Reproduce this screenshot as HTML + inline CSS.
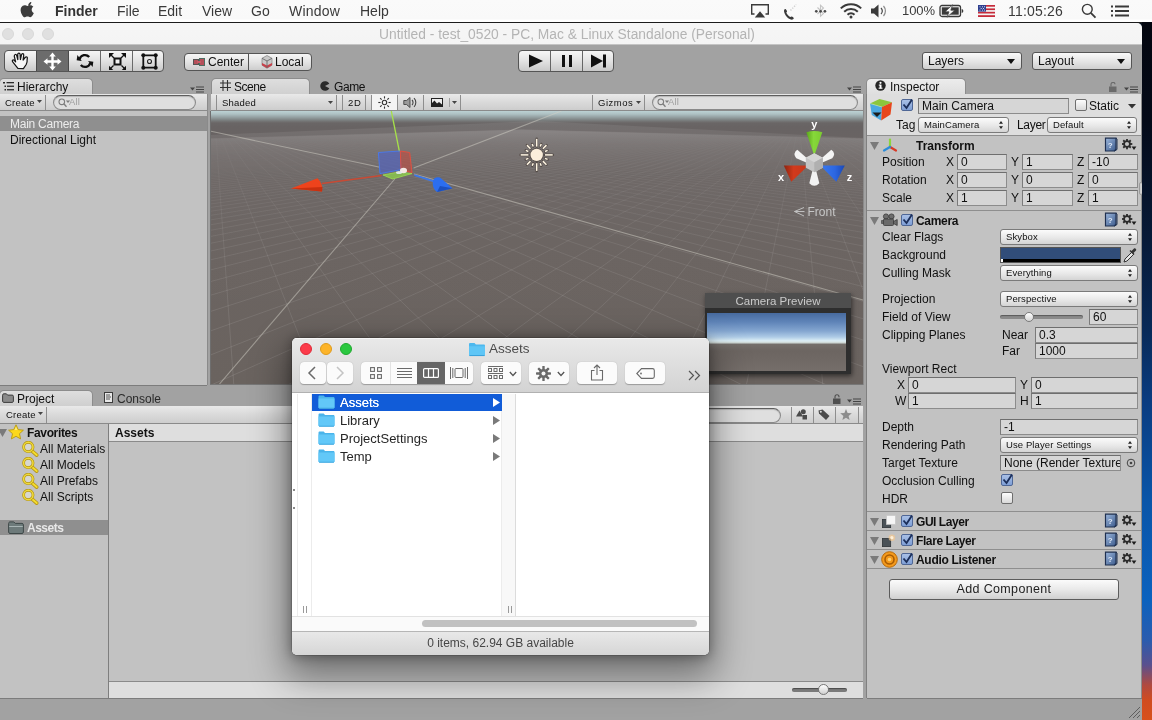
<!DOCTYPE html>
<html>
<head>
<meta charset="utf-8">
<title>Unity</title>
<style>
*{box-sizing:border-box;margin:0;padding:0}
html{background:#0a1422}
#win,#menubar,#finder{will-change:transform}
html,body{width:1152px;height:720px;overflow:hidden;font-family:"Liberation Sans",sans-serif;font-size:12px;color:#111}
.a{position:absolute}
#desk{left:1142px;top:22px;width:10px;height:698px;background:linear-gradient(#03060f 0px,#040a18 98px,#071a38 218px,#082a58 308px,#0a3c80 378px,#0a55a8 478px,#0b62be 578px,#2a5cae 618px,#5a508e 643px,#b04a40 663px,#d04c20 678px,#d8501c 698px)}
#menubar{left:0;top:0;width:1152px;height:22px;background:linear-gradient(#fafafa,#f9f9f9 19px,#fff 20px)}
#menuline{left:0;top:22px;width:1152px;height:1px;background:#1c1c1c}
.mi{position:absolute;top:2px;font-size:14px;line-height:18px;color:#3a3a3a;white-space:nowrap}
#win{left:0;top:23px;width:1142px;height:697px;background:#a2a2a2;border-top-right-radius:5px;overflow:hidden}
#titlebar{left:0;top:0;width:1142px;height:22px;background:linear-gradient(#f6f6f6,#f4f4f4);border-bottom:1px solid #c4c4c4}
#title{left:0;top:4px;width:1134px;text-align:center;font-size:13.8px;line-height:16px;color:#b4b4b4;white-space:nowrap}
.tl{position:absolute;width:12px;height:12px;border-radius:6px;background:#e0e0e0;border:1px solid #d9d9d9;top:5px}
/* unity generic */
.ubtn{position:absolute;background:linear-gradient(#f4f4f4,#dadada 60%,#c4c4c4);border:1px solid #5f5f5f;}
.panelbg{position:absolute;background:#c2c2c2}
.tab{position:absolute;height:17px;background:linear-gradient(#e2e2e2,#cdcdcd);border:1px solid #8a8a8a;border-bottom:none;border-radius:4px 4px 0 0;font-size:12px;line-height:15px;white-space:nowrap}
.tbar{position:absolute;height:17px;background:linear-gradient(#e8e8e8,#d2d2d2);border-bottom:1px solid #8e8e8e;border-top:1px solid #f0f0f0}
.t{position:absolute;white-space:nowrap;font-size:12px;line-height:14px;color:#111}
.b{font-weight:bold}
/* panels */
.pbg{position:absolute;background:#c2c2c2}
.tabrow-menu{position:absolute}
.utab{position:absolute;height:17px;background:linear-gradient(#dedede,#cfcfcf);border:1px solid #8c8c8c;border-bottom:none;border-radius:5px 5px 0 0}
.utb{position:absolute;height:17px;background:linear-gradient(#e9e9e9,#dadada 50%,#cdcdcd);border-bottom:1px solid #8a8a8a}
.sep{position:absolute;width:1px;background:#8e8e8e}
.w{color:#fff}
.fld{position:absolute;height:16px;background:#d6d6d6;border:1px solid #8c8c8c;border-top-color:#6e6e6e;border-left-color:#7a7a7a;font-size:12px;line-height:14px;padding-left:3px;white-space:nowrap;overflow:hidden;color:#111}
.dd{position:absolute;height:16px;background:linear-gradient(#fbfbfb,#e8e8e8 55%,#d4d4d4);border:1px solid #7a7a7a;border-radius:3px;font-size:9.500px;letter-spacing:.1px;line-height:14px;padding-left:5px;white-space:nowrap;overflow:hidden;color:#111}
.cb{position:absolute;width:12px;height:12px;border:1px solid #6e6e6e;border-radius:2px;background:linear-gradient(#fdfdfd,#d9d9d9)}
.cb.on{background:linear-gradient(#a9c0e6,#7f9fd6);border-color:#4f6796}
.hline{position:absolute;height:1px;background:#8e8e8e}
.search{position:absolute;height:15px;border-radius:8px;background:#dfdfdf;border:1px solid #8a8a8a;border-top-color:#5e5e5e;box-shadow:inset 0 1px 1px rgba(0,0,0,.18)}

.fbtn{position:absolute;top:24px;height:22px;border-radius:4px;background:#fbfbfb;box-shadow:0 .5px 1px rgba(0,0,0,.28)}
.tb{font-size:9.500px;letter-spacing:.2px;line-height:13px;margin-top:-1px}

</style>
</head>
<body>
<div class="a" id="menubar">
  <svg class="a" style="left:20px;top:1px" width="16" height="19" viewBox="0 0 16 19"><path fill="#3c3c3c" d="M11.2 1.2c.1 1-.3 1.9-.9 2.6-.6.7-1.5 1.2-2.4 1.100-.1-.9.3-1.900.9-2.500.6-.7 1.600-1.200 2.400-1.200zM13.900 13c-.4.900-.6 1.300-1.100 2.100-.7 1.100-1.700 2.400-2.900 2.400-1.100 0-1.400-.7-2.800-.7-1.500 0-1.800.7-2.900.7-1.200 0-2.100-1.200-2.800-2.300-2-3-2.200-6.600-1-8.500.900-1.300 2.200-2.100 3.500-2.100 1.300 0 2.100.7 3.200.7 1 0 1.700-.7 3.200-.7 1.100 0 2.300.6 3.100 1.700-2.700 1.500-2.300 5.400.5 6.700z" transform="scale(.93) translate(1,0)"/></svg>
  <div class="mi b" style="left:55px;color:#333">Finder</div>
  <div class="mi" style="left:117px">File</div>
  <div class="mi" style="left:158px">Edit</div>
  <div class="mi" style="left:202px">View</div>
  <div class="mi" style="left:251px">Go</div>
  <div class="mi" style="left:289px;letter-spacing:.2px">Window</div>
  <div class="mi" style="left:360px">Help</div>
  <!-- airplay -->
  <svg class="a" style="left:750px;top:3px" width="20" height="16" viewBox="0 0 20 16"><path d="M4.500 11H1.700V1.700h16.600V11h-2.800" fill="none" stroke="#3a3a3a" stroke-width="1.400"/><path d="M10 8.200l5.200 6.300H4.800z" fill="#3a3a3a"/></svg>
  <!-- phone -->
  <svg class="a" style="left:782px;top:3px" width="17" height="17" viewBox="0 0 18 18"><path d="M2.200 7.500c.5-1 1.300-1.400 1.800-1 .6.500 1.200 1.600 1.300 2.200.1.600-.6.900-.7 1.400.4 1.700 2.400 3.900 4.300 4.700.5 0 .9-.7 1.500-.5.600.2 1.600 1 2 1.600.3.600-.3 1.300-1.300 1.700-1.100.4-3.800-.6-5.900-2.800-2.100-2.200-3.500-5.600-3-7.300z" fill="#3a3a3a"/><path d="M9 8l6-6.500" stroke="#d0d0d0" stroke-width="1.600" stroke-dasharray="1.400 1.400"/></svg>
  <!-- bluetooth -->
  <svg class="a" style="left:813px;top:2px" width="16" height="18" viewBox="0 0 16 18"><path d="M4.500 5.500l6 6-3 2.800V3.200l3 2.800-6 6" fill="none" stroke="#c4c4c4" stroke-width="1.100"/><circle cx="3.300" cy="9.300" r="1.350" fill="#4a4a4a"/><circle cx="7.600" cy="9.300" r="1.350" fill="#4a4a4a"/><circle cx="11.900" cy="9.300" r="1.350" fill="#4a4a4a"/></svg>
  <!-- wifi -->
  <svg class="a" style="left:839px;top:2px" width="24" height="17" viewBox="0 0 24 17"><g fill="none" stroke="#3a3a3a" stroke-width="2" stroke-linecap="butt"><path d="M1.800 6.400a14.500 14.500 0 0 1 20.400 0"/><path d="M5.200 9.700a9.700 9.700 0 0 1 13.600 0"/><path d="M8.500 12.800a5 5 0 0 1 7 0"/></g><circle cx="12" cy="15" r="1.500" fill="#3a3a3a"/></svg>
  <!-- speaker -->
  <svg class="a" style="left:870px;top:3px" width="20" height="16" viewBox="0 0 20 16"><path d="M1 5.500h3l4.500-4v13l-4.500-4H1z" fill="#3a3a3a"/><path d="M11 5a4.500 4.500 0 0 1 0 6" fill="none" stroke="#4a4a4a" stroke-width="1.200"/><path d="M13.500 3a7.500 7.500 0 0 1 0 10" fill="none" stroke="#8a8a8a" stroke-width="1.200"/></svg>
  <div class="mi" style="left:902px;font-size:13px;letter-spacing:-.1px">100%</div>
  <!-- battery -->
  <svg class="a" style="left:939px;top:4px" width="26" height="14" viewBox="0 0 26 14"><rect x="1" y="1.500" width="20.500" height="11" rx="2" fill="none" stroke="#3a3a3a" stroke-width="1.300"/><rect x="2.800" y="3.300" width="16.900" height="7.400" fill="#3a3a3a"/><path d="M22.700 5v4c1-.2 1.600-1 1.600-2s-.6-1.800-1.600-2z" fill="#3a3a3a"/><path d="M13.500 .8L6 7.800h4l-2 5.400 7.800-7h-4z" fill="#fafafa" stroke="#3a3a3a" stroke-width=".7"/></svg>
  <!-- flag -->
  <svg class="a" style="left:978px;top:5px" width="17" height="12" viewBox="0 0 17 12"><rect width="17" height="12" fill="#f4f4f4"/><g fill="#c62b3a"><rect y="0" width="17" height="1.700"/><rect y="3.400" width="17" height="1.700"/><rect y="6.800" width="17" height="1.700"/><rect y="10.200" width="17" height="1.800"/></g><rect width="8" height="6.600" fill="#2e3f8f"/><g fill="#cfd4ee"><rect x="1.500" y="1.300" width="1" height="1"/><rect x="4" y="1.300" width="1" height="1"/><rect x="6" y="1.300" width="1" height="1"/><rect x="2.700" y="3" width="1" height="1"/><rect x="5" y="3" width="1" height="1"/><rect x="1.500" y="4.600" width="1" height="1"/><rect x="4" y="4.600" width="1" height="1"/><rect x="6" y="4.600" width="1" height="1"/></g></svg>
  <div class="mi" style="left:1008px;letter-spacing:.2px">11:05:26</div>
  <!-- search -->
  <svg class="a" style="left:1081px;top:3px" width="16" height="16" viewBox="0 0 16 16"><circle cx="6.300" cy="6.300" r="4.900" fill="none" stroke="#3a3a3a" stroke-width="1.400"/><path d="M9.800 9.800l4.700 4.900" stroke="#3a3a3a" stroke-width="1.800"/></svg>
  <!-- list -->
  <svg class="a" style="left:1110px;top:5px" width="20" height="12" viewBox="0 0 20 12"><g fill="#3a3a3a"><rect x="1" y="0.500" width="2" height="2"/><rect x="1" y="5" width="2" height="2"/><rect x="1" y="9.500" width="2" height="2"/><rect x="5" y="0.500" width="14" height="2"/><rect x="5" y="5" width="14" height="2"/><rect x="5" y="9.500" width="14" height="2"/></g></svg>
</div>
<div class="a" id="menuline"></div>
<div class="a" id="desk"></div>
<div class="a" id="win">
  <div class="a" id="titlebar">
    <div class="tl" style="left:2px"></div><div class="tl" style="left:22px"></div><div class="tl" style="left:42px"></div>
    <div class="a" id="title">Untitled - test_0520 - PC, Mac &amp; Linux Standalone (Personal)</div>
  </div>
  <!-- ===== main toolbar ===== -->
  <div class="a" id="tools" style="left:4px;top:27px;width:160px;height:22px;border:1px solid #555;border-radius:4px;background:linear-gradient(#f6f6f6,#e2e2e2 50%,#c9c9c9);overflow:hidden">
    <div class="a" style="left:31px;top:0;width:33px;height:20px;background:#6c6c6c;border-left:1px solid #4a4a4a;border-right:1px solid #4a4a4a"></div>
    <div class="a" style="left:95px;top:0;width:1px;height:20px;background:#6a6a6a"></div>
    <div class="a" style="left:127px;top:0;width:1px;height:20px;background:#6a6a6a"></div>
    <!-- hand -->
    <svg class="a" style="left:5px;top:0px" width="20" height="20" viewBox="0 0 20 20"><path d="M7.900 17.300L3.300 11.600Q1.600 9.700 2.800 9Q4 8.400 5.600 10.800L4.300 5.300Q4.200 3.600 5.300 3.500Q6.400 3.400 6.900 5L7.800 8.600L7.700 3.300Q7.800 2 8.900 2Q10 2 10.100 3.300L10.400 8.500L11.500 3.800Q11.900 2.500 12.900 2.700Q13.900 2.900 13.700 4.300L13.100 9L15.100 6.500Q16 5.400 16.900 6Q17.700 6.600 17.200 7.900Q17.400 11 16.200 13.500L13.400 17.700z" fill="#f6f6f6" stroke="#161616" stroke-width="1.250" stroke-linejoin="round"/></svg>
    <!-- move -->
    <svg class="a" style="left:38px;top:1px" width="19" height="19" viewBox="0 0 19 19"><path d="M9.500 0.500l3.300 4h-2.100v3.800h3.800V6.200l4 3.300-4 3.300v-2.100h-3.800v3.800h2.100l-3.300 4-3.300-4h2.100v-3.800H4.500v2.100l-4-3.300 4-3.300v2.100h3.800V4.500H6.200z" fill="#fff"/></svg>
    <!-- rotate -->
    <svg class="a" style="left:71px;top:1px" width="18" height="18" viewBox="0 0 18 18"><g fill="none" stroke="#111" stroke-width="2.300"><path d="M3.600 7.200A5.600 5.600 0 0 1 13.200 5"/><path d="M14.400 10.800A5.600 5.600 0 0 1 4.800 13"/></g><path d="M1 3.200v5.300h5.300z" fill="#111" transform="rotate(8 3 6)"/><path d="M17 14.800V9.500h-5.300z" fill="#111" transform="rotate(8 15 12)"/></svg>
    <!-- scale -->
    <svg class="a" style="left:103px;top:1px" width="19" height="19" viewBox="0 0 19 19"><rect x="6.500" y="6.500" width="6" height="6" fill="#f0f0f0" stroke="#111" stroke-width="2"/><g fill="#111"><path d="M1 1h5L1 6z"/><path d="M18 1h-5l5 5z"/><path d="M1 18h4.200L1 13.800z"/><path d="M18 18h-4.200l4.200-4.200z"/></g><g stroke="#111" stroke-width="1.300"><path d="M2 2l4 4M17 2l-4 4M2 17l3.500-3.500M17 17l-3.500-3.500"/></g></svg>
    <!-- rect -->
    <svg class="a" style="left:135px;top:1px" width="19" height="19" viewBox="0 0 19 19"><g stroke="#111" stroke-width="1.800"><path d="M5 3.300h9M5 15.700h9M3.300 5v9M15.700 5v9"/></g><g fill="#111"><circle cx="3.300" cy="3.300" r="2"/><circle cx="15.700" cy="3.300" r="2"/><circle cx="3.300" cy="15.700" r="2"/><circle cx="15.700" cy="15.700" r="2"/></g><circle cx="9.500" cy="9.500" r="2" fill="none" stroke="#222" stroke-width="1.100"/></svg>
  </div>
  <!-- center/local -->
  <div class="a" style="left:184px;top:30px;width:128px;height:18px;border:1px solid #555;border-radius:4px;background:linear-gradient(#f6f6f6,#e4e4e4 50%,#cdcdcd)">
    <div class="a" style="left:63px;top:0;width:1px;height:16px;background:#555"></div>
    <svg class="a" style="left:8px;top:4px" width="12" height="8" viewBox="0 0 12 8"><rect x=".5" y="1.500" width="5" height="5" fill="#b4505a" stroke="#555" stroke-width="1"/><rect x="6.500" y=".5" width="5" height="7" fill="#b4505a" stroke="#4e6e62" stroke-width="1"/><rect x="4" y="3" width="4" height="2" fill="#c85a64"/></svg>
    <div class="t" style="left:23px;top:1px">Center</div>
    <svg class="a" style="left:76px;top:1px" width="12" height="14" viewBox="0 0 12 14"><path d="M6 .5l5 2.800v6.900L6 13.200 1 10.200V3.300z" fill="#c9c9c9" stroke="#8a8a8a" stroke-width=".8"/><path d="M1 8l5 2.500L11 8v2.200L6 13.200 1 10.200z" fill="#c8404a"/><path d="M6 6v7M1 3.300L6 6l5-2.700" fill="none" stroke="#6a6a6a" stroke-width=".9"/></svg>
    <div class="t" style="left:90px;top:1px">Local</div>
  </div>
  <!-- play -->
  <div class="a" style="left:518px;top:27px;width:96px;height:22px;border:1px solid #555;border-radius:4px;background:linear-gradient(#f6f6f6,#e2e2e2 50%,#c9c9c9)">
    <div class="a" style="left:31px;top:0;width:1px;height:20px;background:#666"></div>
    <div class="a" style="left:63px;top:0;width:1px;height:20px;background:#666"></div>
    <svg class="a" style="left:9px;top:3px" width="16" height="14" viewBox="0 0 16 14"><path d="M1 .5l14 6.500L1 13.500z" fill="#111"/></svg>
    <svg class="a" style="left:42px;top:4px" width="12" height="12" viewBox="0 0 12 12"><rect x="1" y="0" width="3" height="12" fill="#111"/><rect x="8" y="0" width="3" height="12" fill="#111"/></svg>
    <svg class="a" style="left:71px;top:3px" width="18" height="14" viewBox="0 0 18 14"><path d="M1 .5l12 6.500L1 13.500z" fill="#111"/><rect x="13" y=".5" width="3" height="13" fill="#111"/></svg>
  </div>
  <!-- layers / layout -->
  <div class="a" style="left:922px;top:29px;width:100px;height:18px;border:1px solid #555;border-radius:3px;background:linear-gradient(#fafafa,#e6e6e6 50%,#cfcfcf)">
    <div class="t" style="left:5px;top:1px">Layers</div>
    <svg class="a" style="left:84px;top:6px" width="8" height="5" viewBox="0 0 8 5"><path d="M0 0h8L4 5z" fill="#111"/></svg>
  </div>
  <div class="a" style="left:1032px;top:29px;width:100px;height:18px;border:1px solid #555;border-radius:3px;background:linear-gradient(#fafafa,#e6e6e6 50%,#cfcfcf)">
    <div class="t" style="left:5px;top:1px">Layout</div>
    <svg class="a" style="left:84px;top:6px" width="8" height="5" viewBox="0 0 8 5"><path d="M0 0h8L4 5z" fill="#111"/></svg>
  </div>

<div class="a" style="left:0;top:-23px;width:1142px;height:720px">
<div class="utab" style="left:-1px;top:78px;width:94px"></div>
<svg class="a" style="left:3px;top:82px" width="11" height="9" viewBox="0 0 11 9"><g fill="#2b2b2b"><rect x="0" y="0" width="2" height="1.500"/><rect x="1.500" y="3.500" width="1.500" height="1.500"/><rect x="1.500" y="7" width="1.500" height="1.500"/><rect x="3.500" y="0" width="7.500" height="1.300"/><rect x="4" y="3.600" width="7" height="1.300"/><rect x="4" y="7.100" width="7" height="1.300"/></g></svg>
<div class="t " style="left:17px;top:80px;">Hierarchy</div>
<svg class="a" style="left:190px;top:86px" width="14" height="7" viewBox="0 0 14 7"><path d="M0 1.500h5L2.500 4.500z" fill="#444"/><path d="M6 1h8M6 3.500h8M6 6h8" stroke="#444" stroke-width="1"/></svg>
<div class="utb" style="left:0;top:94px;width:207px"></div>
<div class="t tb" style="left:5px;top:97px;">Create</div>
<svg class="a" style="left:37px;top:100px" width="5" height="3" viewBox="0 0 5 3"><path d="M0 0h5L2.500 3z" fill="#444"/></svg>
<div class="sep" style="left:45px;top:95px;height:15px"></div>
<div class="search" style="left:53px;top:95px;width:143px"></div><svg class="a" style="left:58px;top:98px" width="14" height="10" viewBox="0 0 14 10"><circle cx="3.800" cy="3.800" r="2.800" fill="none" stroke="#7d7d7d" stroke-width="1.100"/><path d="M5.800 5.800l2.700 3" stroke="#7d7d7d" stroke-width="1.300"/><path d="M7.800 2.500h4.400L10 5z" fill="#7d7d7d"/></svg><div class="t tb" style="left:69px;top:96px;color:#a0a0a0">All</div>
<div class="pbg" style="left:0;top:111px;width:207px;height:274px"></div>
<div class="a" style="left:0;top:116px;width:207px;height:15px;background:#8f8f8f"></div>
<div class="t " style="left:10px;top:117px;color:#ececec;letter-spacing:-.25px">Main Camera</div>
<div class="t " style="left:10px;top:133px;">Directional Light</div>
<div class="hline" style="left:0;top:385px;width:207px;background:#7c7c7c"></div>
<div class="utab" style="left:211px;top:78px;width:99px"></div>
<svg class="a" style="left:220px;top:80px" width="11" height="11" viewBox="0 0 11 11"><path d="M3 0v11M7.500 0v11M0 3h11M0 7.500h11" stroke="#333" stroke-width="1.100"/></svg>
<div class="t " style="left:234px;top:80px;letter-spacing:-.45px">Scene</div>
<svg class="a" style="left:320px;top:81px" width="10" height="10" viewBox="0 0 10 10"><path d="M5 5L9.300 2.800A4.800 4.800 0 1 0 9.300 7.200z" fill="#2a2a2a"/></svg>
<div class="t " style="left:334px;top:80px;letter-spacing:-.4px">Game</div>
<svg class="a" style="left:847px;top:86px" width="14" height="7" viewBox="0 0 14 7"><path d="M0 1.500h5L2.500 4.500z" fill="#444"/><path d="M6 1h8M6 3.500h8M6 6h8" stroke="#444" stroke-width="1"/></svg>
<div class="utb" style="left:211px;top:94px;width:652px"></div>
<div class="sep" style="left:216px;top:95px;height:15px"></div>
<div class="sep" style="left:336px;top:95px;height:15px"></div>
<div class="sep" style="left:342px;top:95px;height:15px"></div>
<div class="sep" style="left:365px;top:95px;height:15px"></div>
<div class="sep" style="left:371px;top:95px;height:15px"></div>
<div class="sep" style="left:397px;top:95px;height:15px"></div>
<div class="sep" style="left:423px;top:95px;height:15px"></div>
<div class="sep" style="left:460px;top:95px;height:15px"></div>
<div class="sep" style="left:592px;top:95px;height:15px"></div>
<div class="sep" style="left:644px;top:95px;height:15px"></div>
<div class="sep" style="left:449px;top:98px;height:9px;background:#a0a0a0"></div>
<div class="t tb" style="left:222px;top:97px;">Shaded</div>
<svg class="a" style="left:328px;top:101px" width="5" height="3" viewBox="0 0 5 3"><path d="M0 0h5L2.500 3z" fill="#444"/></svg>
<div class="t tb" style="left:348px;top:97px;letter-spacing:.6px">2D</div>
<div class="a" style="left:372px;top:94px;width:25px;height:16px;background:#f4f4f4"></div>
<svg class="a" style="left:378px;top:96px" width="13" height="13" viewBox="0 0 13 13"><g stroke="#333" stroke-width="1.100"><path d="M6.500 0.300v2.200" transform="rotate(0 6.500 6.500)"/><path d="M6.500 0.300v2.200" transform="rotate(45 6.500 6.500)"/><path d="M6.500 0.300v2.200" transform="rotate(90 6.500 6.500)"/><path d="M6.500 0.300v2.200" transform="rotate(135 6.500 6.500)"/><path d="M6.500 0.300v2.200" transform="rotate(180 6.500 6.500)"/><path d="M6.500 0.300v2.200" transform="rotate(225 6.500 6.500)"/><path d="M6.500 0.300v2.200" transform="rotate(270 6.500 6.500)"/><path d="M6.500 0.300v2.200" transform="rotate(315 6.500 6.500)"/></g><circle cx="6.500" cy="6.500" r="2.200" fill="none" stroke="#333" stroke-width="1.100"/></svg>
<svg class="a" style="left:403px;top:96px" width="15" height="13" viewBox="0 0 15 13"><path d="M.8 4.500h2.700l3.500-3v10l-3.500-3H.8z" fill="#9a9a9a" stroke="#444" stroke-width=".9"/><path d="M9 4a3.500 3.500 0 0 1 0 5M11 2.200a6 6 0 0 1 0 8.600" fill="none" stroke="#444" stroke-width="1.100"/></svg>
<svg class="a" style="left:431px;top:98px" width="12" height="9" viewBox="0 0 12 9"><rect x=".5" y=".5" width="11" height="8" fill="#eee" stroke="#222" stroke-width="1"/><path d="M1 8V5l2.500-2.500L6 5.500l2-1.500 3 2.500V8z" fill="#222"/></svg>
<svg class="a" style="left:452px;top:101px" width="5" height="3" viewBox="0 0 5 3"><path d="M0 0h5L2.500 3z" fill="#444"/></svg>
<div class="t tb" style="left:598px;top:97px;letter-spacing:.5px">Gizmos</div>
<svg class="a" style="left:636px;top:101px" width="5" height="3" viewBox="0 0 5 3"><path d="M0 0h5L2.500 3z" fill="#444"/></svg>
<div class="search" style="left:652px;top:95px;width:206px"></div><svg class="a" style="left:657px;top:98px" width="14" height="10" viewBox="0 0 14 10"><circle cx="3.800" cy="3.800" r="2.800" fill="none" stroke="#7d7d7d" stroke-width="1.100"/><path d="M5.800 5.800l2.700 3" stroke="#7d7d7d" stroke-width="1.300"/><path d="M7.800 2.500h4.400L10 5z" fill="#7d7d7d"/></svg><div class="t tb" style="left:668px;top:96px;color:#a0a0a0">All</div>
<div class="a" id="scene" style="left:211px;top:111px;width:652px;height:273px;overflow:hidden;background:linear-gradient(#bcd1d3 0px,#aec1c3 3px,#8e9899 7px,#757777 10px,#6a6666 12px,#686363 16px,#6a6463 40px,#6b6461 150px,#6a635f 273px)">
<svg class="a" style="left:0;top:0" width="652" height="273" viewBox="0 0 652 273"><defs><linearGradient id="hz" x1="0" y1="0" x2="0" y2="1"><stop offset="0.03" stop-color="#fff" stop-opacity=".075"/><stop offset="0.2" stop-color="#fff" stop-opacity=".03"/><stop offset="0.5" stop-color="#fff" stop-opacity=".005"/><stop offset="1" stop-color="#fff" stop-opacity="0"/></linearGradient><linearGradient id="gm" x1="0" y1="0" x2="0" y2="1"><stop offset="0.04" stop-color="#fff" stop-opacity=".12"/><stop offset="0.2" stop-color="#fff" stop-opacity=".35"/><stop offset="0.5" stop-color="#fff" stop-opacity=".75"/><stop offset="1" stop-color="#fff" stop-opacity="1"/></linearGradient><mask id="gmask"><rect width="652" height="273" fill="url(#gm)"/></mask><clipPath id="gclip"><path d="M0 24L326 10L652 27V273H0z"/></clipPath></defs>
<path d="M0 24L326 10L652 27V273H0z" fill="url(#hz)"/>
<g clip-path="url(#gclip)"><path d="M3655.4 868.2L647.0 27.5M2563.6 611.9L641.8 27.3M6498.0 1982.9L636.6 27.2M3281.6 1006.2L631.6 27.1M2196.0 676.6L626.6 26.9M1650.6 511.0L621.7 26.8M2764.3 1197.3L616.9 26.7M1739.6 756.9L612.1 26.6M1269.7 555.0L607.5 26.5M2001.1 1479.3L602.8 26.3M1157.9 859.4L598.3 26.2M815.4 607.5L593.8 26.1M762.0 1936.9L589.4 26.0M78.2 1049.5L5.2 27.5M391.1 994.4L585.1 25.9M263.9 671.3L10.4 27.3M263.9 671.3L580.8 25.8M1252.8 1755.6L15.6 27.2M199.6 508.0L576.6 25.7M926.8 900.1L20.7 27.0M-666.1 1180.5L572.5 25.6M815.4 607.5L25.6 26.9M-419.6 750.3L568.4 25.5M2292.8 1371.5L30.5 26.8M-305.6 551.4L564.4 25.3M1562.0 788.2L35.3 26.6M-2216.9 1453.6L560.4 25.2M1269.7 555.0L40.0 26.5M-1288.8 850.7L556.5 25.1M2957.5 1126.0L44.7 26.4M-907.8 603.2L552.6 25.0M2055.2 701.4L49.3 26.2M-4712.5 1893.0L548.8 24.9M6498.0 1982.9L53.7 26.1M-2431.5 982.8L545.1 24.9M3418.9 955.5L58.2 26.0M-1637.6 666.0L541.3 24.8M2449.2 632.0L62.5 25.9M-1234.0 505.0L537.7 24.7M6371.7 1505.8L66.8 25.7M-4000.6 1164.2L534.1 24.6M3758.0 830.3L71.0 25.6M-2540.4 743.7L530.5 24.5M2771.3 575.3L75.1 25.5M-1860.5 547.9L527.0 24.4M6294.6 1214.6L79.2 25.4M-6290.0 1428.8L523.6 24.3M4017.7 734.4L83.2 25.3M-3686.2 842.3L520.1 24.2M13314.3 2278.2L87.1 25.2M-2606.4 599.0L516.8 24.1M6242.7 1018.4L91.0 25.1M-9943.0 1851.1L513.4 24.0M4222.9 658.6L94.9 24.9M-5188.3 971.5L510.2 24.0M11344.4 1669.6L98.6 24.8M-3509.1 660.9L506.9 23.9M6205.3 877.2L102.3 24.7M-2650.6 502.1L503.7 23.8M4389.2 597.1L106.0 24.6M-7243.4 1148.3L500.5 23.7M10208.3 1318.6L109.6 24.5M-4624.0 737.3L497.4 23.6M6177.1 770.7L113.1 24.4M-3395.4 544.5L494.3 23.6M4526.7 546.3L116.6 24.3M-10225.6 1404.9L491.3 23.5M9469.1 1090.2L120.1 24.2M-6035.9 834.0L488.3 23.4M6155.1 687.5L123.4 24.1M-4280.9 594.9L485.3 23.3M17540.9 1873.7L126.8 24.0M-14945.5 1811.0L482.4 23.2M8949.7 929.7L130.1 23.9M-7881.8 960.5L479.5 23.2M6137.4 620.7L133.3 23.9M-5351.3 655.8L476.6 23.1M14862.0 1442.2L136.5 23.8M-4050.4 499.2L473.8 23.0M8564.8 810.8L139.7 23.7M-10398.0 1132.9L471.0 23.0M6122.9 566.0L142.8 23.6M-6671.2 730.9L468.2 22.9M13190.8 1173.0L145.9 23.5M-4910.5 541.0L465.5 22.8M8268.1 719.1L148.9 23.4M-14030.6 1381.8L462.8 22.7M25476.2 2135.1L151.9 23.3M-8339.2 825.9L460.1 22.7M12048.7 989.1L154.8 23.2M-5932.0 590.8L457.5 22.6M8032.4 646.3L157.7 23.2M-19734.6 1772.6L454.9 22.5M20487.6 1591.7L160.6 23.1M-10514.0 949.7L452.3 22.5M11218.8 855.4L163.4 23.0M-7165.1 650.8L449.8 22.4M7840.7 587.1L166.2 22.9M-5433.7 496.3L447.3 22.3M17531.4 1269.7L169.0 22.8M-13468.0 1117.8L444.8 22.3M10588.4 753.9L171.7 22.8M-8683.0 724.7L442.3 22.2M7681.6 538.0L174.4 22.7M-6406.3 537.7L439.9 22.2M15575.8 1056.7L177.1 22.6M-17711.3 1359.4L437.5 22.1M10093.4 674.2L179.7 22.5M-10597.5 817.9L435.1 22.0M27424.9 1776.0L182.3 22.5M-7560.0 586.7L432.7 22.0M14186.3 905.3L184.8 22.4M-24323.7 1735.8L430.4 21.9M9694.3 609.9L187.3 22.3M-13087.1 939.1L428.1 21.9M22659.3 1383.8L189.8 22.3M-8950.9 645.9L425.8 21.8M13148.2 792.2L192.3 22.2M-36057.4 2403.7L423.6 21.7M9365.7 557.0L194.7 22.1M-16456.8 1103.2L421.3 21.7M19626.4 1134.2L197.1 22.1M-10660.4 718.6L419.1 21.6M12343.2 704.5L199.5 22.0M-7883.1 534.3L416.9 21.6M36193.3 2008.9L201.8 21.9M-21273.8 1337.7L414.8 21.5M17526.6 961.5L204.1 21.9M-12812.1 810.1L412.6 21.5M11700.6 634.5L206.4 21.8M-9165.5 582.7L410.5 21.4M28809.9 1520.7L208.7 21.7M-28725.0 1700.5L408.4 21.4M15986.7 834.7L210.9 21.7M-15603.0 928.8L406.4 21.3M11175.9 577.4L213.1 21.6M-10709.5 641.0L404.3 21.2M24326.2 1224.3L215.3 21.5M-41784.7 2336.3L402.3 21.2M14809.0 737.8L217.4 21.5M-19367.7 1088.9L400.3 21.1M47628.1 2312.7L219.6 21.4M-12604.2 712.6L398.3 21.1M21314.3 1025.1L221.7 21.4M-9341.3 531.0L396.3 21.0M13879.3 661.3L223.8 21.3M-24723.6 1316.7L394.3 21.0M36323.3 1688.0L225.8 21.2M-14984.2 802.5L392.4 20.9M19151.8 882.1L227.9 21.2M-10749.0 578.8L390.5 20.9M13126.7 599.4L229.9 21.1M-32949.8 1666.6L388.6 20.8M29845.0 1330.0L231.9 21.1M-18063.5 918.7L386.7 20.8M17523.6 774.5L233.8 21.0M-12441.5 636.3L384.9 20.8M12504.9 548.2L235.8 21.0M-47198.3 2272.7L383.0 20.7M25646.0 1097.9L237.7 20.9M-22203.5 1075.1L381.2 20.7M16253.6 690.5L239.6 20.9M-14515.2 706.7L379.4 20.6M45708.6 1896.9L241.5 20.8M-10781.3 527.8L377.6 20.6M22703.4 935.3L243.3 20.7M-28066.0 1296.4L375.9 20.5M15235.3 623.2L245.2 20.7M-17115.1 794.9L374.1 20.5M36417.3 1455.9L247.0 20.6M-12310.7 574.9L372.4 20.4M20526.6 815.1L248.8 20.6M-37008.5 1634.1L370.6 20.4M14400.6 568.0L250.6 20.5M-20470.6 908.9L368.9 20.3M30647.9 1182.0L252.4 20.5M-14147.4 631.6L367.2 20.3M18851.1 722.5L254.1 20.4M-52323.3 2212.4L365.6 20.3M57765.1 2165.2L255.8 20.4M-24967.1 1061.5L363.9 20.2M26716.9 995.4L257.6 20.3M-16394.3 700.9L362.3 20.2M17521.7 649.0L259.3 20.3M-12203.4 524.6L360.6 20.1M44376.6 1608.3L260.9 20.2M-31305.9 1276.7L359.0 20.1M23866.5 860.2L262.6 20.2M-19205.9 787.6L357.4 20.0M16441.1 589.3L264.2 20.2M-13851.4 571.1L355.8 20.0M36488.4 1280.2L265.9 20.1M-40910.8 1602.8L354.3 20.0M21704.8 757.6L267.5 20.1M-22825.9 899.2L352.7 19.9M15545.4 539.8L269.1 20.0M-15827.9 626.9L351.2 19.9M31288.8 1063.9L270.7 20.0M-57182.1 2155.2L349.6 19.9M20009.2 677.1L272.2 19.9M-27661.3 1048.3L348.1 19.8M54213.6 1796.7L273.8 19.9M-18242.2 695.1L346.6 19.8M27603.3 910.6L275.3 19.8M-13607.8 521.4L345.1 19.7M18643.6 612.3L276.8 19.8M-34448.0 1257.6L343.7 19.7M43398.0 1396.4L278.3 19.8M-21257.7 780.3L342.2 19.7M24854.6 796.3L279.8 19.7M-15371.2 567.3L340.8 19.6M17520.3 558.9L281.3 19.7M-44665.5 1572.7L339.3 19.6M36544.2 1142.6L282.7 19.6M-25131.0 889.8L337.9 19.5M22725.8 707.7L284.2 19.6M-17483.5 622.4L336.5 19.5M66681.9 2035.6L285.6 19.6M-61795.0 2101.0L335.1 19.5M31812.3 967.5L287.0 19.5M-30288.7 1035.5L333.7 19.4M21028.4 637.1L288.5 19.5M-20059.8 689.5L332.3 19.4M51699.6 1535.9L289.8 19.4M-14995.1 518.2L330.9 19.4M28349.0 839.2L291.2 19.4M-37496.7 1239.1L329.6 19.3M19643.4 579.5L292.6 19.4M-23271.7 773.2L328.2 19.3M42648.7 1234.1L293.9 19.3M-16870.7 563.6L326.9 19.3M25704.4 741.3L295.3 19.3M-48280.8 1543.7L325.6 19.2M18491.8 531.6L296.6 19.2M-27387.6 880.5L324.3 19.2M14497.5 415.5L297.9 19.2M-19114.8 617.9L323.0 19.2M11960.3 341.7L299.2 19.2M-66180.2 2049.4L321.7 19.1M10206.0 290.7L300.5 19.1M-32851.7 1022.9L320.4 19.1M8920.6 253.3L301.8 19.1M-21847.8 684.0L319.1 19.1M7938.2 224.7L303.1 19.1M-16365.4 515.2L317.9 19.0M7163.1 202.2L304.4 19.0M-40456.0 1221.1L316.6 19.0M6535.8 184.0L305.6 19.0M-25248.9 766.3L315.4 19.0M6017.8 168.9L306.8 19.0M-18350.3 559.9L314.1 18.9M5582.8 156.2L308.1 18.9M-51764.3 1515.8L312.9 18.9M5212.4 145.5L309.3 18.9M-29597.2 871.4L311.7 18.9M4893.1 136.2L310.5 18.8M-20722.3 613.5L310.5 18.8" fill="none" stroke="#fff" stroke-opacity="0.105" stroke-width="1" mask="url(#gmask)"/></g>
<g stroke="#d4d2c8" stroke-opacity=".5" stroke-width="1.100" fill="none"><path d="M0.0 20.3L169.0 56.3"/><path d="M202.6 57.0L350.5 0.0"/><path d="M183.8 68.0L8.5 273.0"/><path d="M203.0 63.0L652.0 189.0"/></g>
<path d="M180.3 0.0L188.5 41.0" stroke="#a6e04a" stroke-width="1.300" fill="none"/>
<path d="M167.4 41.5L189.3 40.0L190.0 58.7L169.0 62.6z" fill="#4f62c8" fill-opacity=".62" stroke="#4a78e8" stroke-width="1"/>
<path d="M189.3 40.0L198.7 41.5L201.0 61.8L190.0 58.7z" fill="#c8483c" fill-opacity=".55" stroke="#e05040" stroke-width="1"/>
<path d="M172.0 64.0L187.8 61.0L201.0 62.6L181.5 68.0z" fill="#8cd24a" fill-opacity=".75" stroke="#9be050" stroke-width=".8"/>
<ellipse cx="192.5" cy="59.5" rx="3.500" ry="2.800" fill="#f4e8e4"/><ellipse cx="188" cy="61.5" rx="3" ry="1.500" fill="#e8f0ff" fill-opacity=".8"/>
<path d="M111.0 72.6L170.6 64.6" stroke="#c84a34" stroke-width="1.500"/>
<path d="M80.0 77.6L106.5 67.3Q112.5 73.0 111.0 80.5z" fill="#ee431c"/><path d="M80.0 77.6L111.0 80.5L111.5 76.0z" fill="#c8300f"/>
<path d="M203.4 64.2L223.7 70.6" stroke="#3e78e6" stroke-width="1.800"/>
<path d="M222.0 70.0Q223.0 65.5 229.0 66.5L241.5 77.2L226.0 81.0Q220.5 77.0 222.0 70.0z" fill="#2c6ef0"/><path d="M226.0 81.0L241.5 77.2L229.0 75.0z" fill="#1c50c0"/>
<g stroke="#3a3028" stroke-opacity=".55" stroke-width="2.600" stroke-linecap="round"><path d="M325.7 35.6V27.9" transform="rotate(0.0 325.7 43.9)"/><path d="M325.7 34.9V32.1" transform="rotate(22.5 325.7 43.9)"/><path d="M325.7 35.1V30.1" transform="rotate(45.0 325.7 43.9)"/><path d="M325.7 34.9V32.1" transform="rotate(67.5 325.7 43.9)"/><path d="M325.7 35.6V27.9" transform="rotate(90.0 325.7 43.9)"/><path d="M325.7 34.9V32.1" transform="rotate(112.5 325.7 43.9)"/><path d="M325.7 35.1V30.1" transform="rotate(135.0 325.7 43.9)"/><path d="M325.7 34.9V32.1" transform="rotate(157.5 325.7 43.9)"/><path d="M325.7 35.6V27.9" transform="rotate(180.0 325.7 43.9)"/><path d="M325.7 34.9V32.1" transform="rotate(202.5 325.7 43.9)"/><path d="M325.7 35.1V30.1" transform="rotate(225.0 325.7 43.9)"/><path d="M325.7 34.9V32.1" transform="rotate(247.5 325.7 43.9)"/><path d="M325.7 35.6V27.9" transform="rotate(270.0 325.7 43.9)"/><path d="M325.7 34.9V32.1" transform="rotate(292.5 325.7 43.9)"/><path d="M325.7 35.1V30.1" transform="rotate(315.0 325.7 43.9)"/><path d="M325.7 34.9V32.1" transform="rotate(337.5 325.7 43.9)"/></g><circle cx="325.7" cy="43.9" r="7" fill="#3a3028" fill-opacity=".6"/>
<g stroke="#fff6e4" stroke-width="1.500"><path d="M325.7 35.6V27.9" transform="rotate(0.0 325.7 43.9)"/><path d="M325.7 34.9V32.1" transform="rotate(22.5 325.7 43.9)"/><path d="M325.7 35.1V30.1" transform="rotate(45.0 325.7 43.9)"/><path d="M325.7 34.9V32.1" transform="rotate(67.5 325.7 43.9)"/><path d="M325.7 35.6V27.9" transform="rotate(90.0 325.7 43.9)"/><path d="M325.7 34.9V32.1" transform="rotate(112.5 325.7 43.9)"/><path d="M325.7 35.1V30.1" transform="rotate(135.0 325.7 43.9)"/><path d="M325.7 34.9V32.1" transform="rotate(157.5 325.7 43.9)"/><path d="M325.7 35.6V27.9" transform="rotate(180.0 325.7 43.9)"/><path d="M325.7 34.9V32.1" transform="rotate(202.5 325.7 43.9)"/><path d="M325.7 35.1V30.1" transform="rotate(225.0 325.7 43.9)"/><path d="M325.7 34.9V32.1" transform="rotate(247.5 325.7 43.9)"/><path d="M325.7 35.6V27.9" transform="rotate(270.0 325.7 43.9)"/><path d="M325.7 34.9V32.1" transform="rotate(292.5 325.7 43.9)"/><path d="M325.7 35.1V30.1" transform="rotate(315.0 325.7 43.9)"/><path d="M325.7 34.9V32.1" transform="rotate(337.5 325.7 43.9)"/></g><circle cx="325.7" cy="43.9" r="6.200" fill="#fbeedb"/>
<defs><linearGradient id="gg" x1="0" x2="1"><stop offset="0" stop-color="#5aa41c"/><stop offset=".45" stop-color="#86d83a"/><stop offset="1" stop-color="#7ccc30"/></linearGradient><linearGradient id="gr" x1="0" x2="1"><stop offset="0" stop-color="#8c2410"/><stop offset=".4" stop-color="#d23a1c"/><stop offset="1" stop-color="#c4361a"/></linearGradient><linearGradient id="gb" x1="0" x2="1"><stop offset="0" stop-color="#3a7af0"/><stop offset=".6" stop-color="#2c66e0"/><stop offset="1" stop-color="#1a48b4"/></linearGradient></defs>
<path d="M598.3 49.2L586.3 38.7Q581.3 42.2 585.3 47.2L599.3 53.2z" fill="#f4f4f4"/>
<path d="M608.3 49.2L620.3 38.7Q625.3 42.2 621.3 47.2L607.3 53.2z" fill="#f4f4f4"/>
<path d="M601.8 58.2L598.3 72.2Q603.3 77.2 608.3 72.2L604.8 58.2z" fill="#f2f2f2"/>
<path d="M595.3 21.2Q603.3 18.7 611.3 21.2L603.8 43.2L602.8 43.2z" fill="url(#gg)"/>
<path d="M572.8 54.5L597.3 54.5L580.3 70.7z" fill="url(#gr)"/>
<path d="M609.3 54.5L633.8 54.5L625.3 70.7z" fill="url(#gb)"/>
<path d="M603.3 42.2L611.8 46.7L611.8 56.7L603.3 61.2L594.8 56.7L594.8 46.7z" fill="#c4c4c4"/><path d="M603.3 42.2L611.8 46.7L603.3 51.2L594.8 46.7z" fill="#d4d4d4"/><path d="M603.3 51.2L611.8 46.7L611.8 56.7L603.3 61.2z" fill="#b0b0b0"/>
<g font-family="Liberation Sans" font-weight="bold" font-size="11" fill="#fff" text-anchor="middle"><text x="603.3" y="16.5">y</text><text x="570" y="69.5">x</text><text x="638.5" y="69.5">z</text></g>
<g stroke="#c0c0c0" stroke-width="1" fill="none"><path d="M593.0 96.5L583.5 100.5L593.0 105.0M583.5 100.5H593.5"/></g>
<text x="596.5" y="105" font-family="Liberation Sans" font-size="12" fill="#c6c6c6">Front</text>
</svg>
<div class="a" style="left:494px;top:182px;width:146px;height:81px;background:#2e2e2e;box-shadow:1px 2px 5px rgba(0,0,0,.55)"><div class="a" style="left:0;top:0;width:146px;height:15px;background:#4e4e4e;color:#cacaca;font-size:11.500px;line-height:17px;text-align:center">Camera Preview</div><div class="a" style="left:2px;top:20px;width:139px;height:58px;background:linear-gradient(#476a9e 0,#5f84b8 9px,#84a6d0 18px,#aecbe6 24px,#def0f6 28px,#cfdad8 29.500px,#746f6b 31.500px,#6c6561 38px,#756e6a 58px)"></div></div>
</div>
<div class="sep" style="left:210px;top:111px;height:274px;background:#6e6e6e"></div>
<div class="hline" style="left:210px;top:384px;width:654px;background:#777"></div>
<div class="sep" style="left:207px;top:94px;height:291px;background:#8a8a8a"></div>
<div class="sep" style="left:863px;top:94px;height:291px;background:#8a8a8a"></div>
<div class="utab" style="left:-1px;top:390px;width:94px;height:16px"></div>
<svg class="a" style="left:2px;top:393px" width="12" height="10" viewBox="0 0 12 10"><path d="M.6 2.200c0-.8.500-1.400 1.200-1.400h2.600l1.200 1.300h4.600c.7 0 1.200.5 1.200 1.200v5c0 .6-.5 1.100-1.200 1.100H1.800c-.7 0-1.200-.5-1.200-1.100z" fill="#8a8a8a" stroke="#3c3c3c" stroke-width="1"/></svg>
<div class="t " style="left:17px;top:392px;">Project</div>
<svg class="a" style="left:104px;top:392px" width="9" height="11" viewBox="0 0 9 11"><rect x=".5" y=".5" width="8" height="10" fill="#e8e8e8" stroke="#3c3c3c" stroke-width="1"/><path d="M2 3h4M2 5h5M2 7h4" stroke="#555" stroke-width="1"/></svg>
<div class="t " style="left:117px;top:392px;color:#2a2a2a">Console</div>
<svg class="a" style="left:833px;top:394px" width="8" height="10" viewBox="0 0 8 10"><rect x="0" y="4.500" width="7.500" height="5.500" fill="#4e4e4e"/><path d="M2 4.500V2.800a2 2 0 0 1 4 0v.4" fill="none" stroke="#4e4e4e" stroke-width="1.100"/></svg>
<svg class="a" style="left:847px;top:398px" width="14" height="7" viewBox="0 0 14 7"><path d="M0 1.500h5L2.500 4.500z" fill="#444"/><path d="M6 1h8M6 3.500h8M6 6h8" stroke="#444" stroke-width="1"/></svg>
<div class="utb" style="left:0;top:406px;width:863px;height:18px"></div>
<div class="t tb" style="left:6px;top:409px;">Create</div>
<svg class="a" style="left:38px;top:412px" width="5" height="3" viewBox="0 0 5 3"><path d="M0 0h5L2.500 3z" fill="#444"/></svg>
<div class="sep" style="left:46px;top:407px;height:16px"></div>
<div class="search" style="left:420px;top:408px;width:361px"></div><svg class="a" style="left:425px;top:411px" width="14" height="10" viewBox="0 0 14 10"><circle cx="3.800" cy="3.800" r="2.800" fill="none" stroke="#7d7d7d" stroke-width="1.100"/><path d="M5.800 5.800l2.700 3" stroke="#7d7d7d" stroke-width="1.300"/><path d="M7.800 2.500h4.400L10 5z" fill="#7d7d7d"/></svg>
<div class="sep" style="left:791px;top:407px;height:16px"></div>
<div class="sep" style="left:813px;top:407px;height:16px"></div>
<div class="sep" style="left:835px;top:407px;height:16px"></div>
<div class="sep" style="left:858px;top:407px;height:16px"></div>
<svg class="a" style="left:796px;top:409px" width="12" height="11" viewBox="0 0 12 11"><path d="M0 7.500L3.500 1.500 7 7.500z" fill="#4a4a4a"/><circle cx="7.300" cy="2.800" r="2.500" fill="#4a4a4a"/><rect x="6.500" y="6" width="4.500" height="4.500" fill="#4a4a4a"/></svg>
<svg class="a" style="left:818px;top:409px" width="12" height="11" viewBox="0 0 12 11"><path d="M.5 1.500L4.500.5l7 6.500-3.500 4-7-6.500z" fill="#4a4a4a"/><circle cx="2.800" cy="2.800" r="1" fill="#ddd"/></svg>
<svg class="a" style="left:840px;top:409px" width="12" height="11" viewBox="0 0 12 11"><path d="M6 0l1.600 3.900 4.200.3-3.200 2.700 1 4.100L6 8.800 2.400 11l1-4.100L.2 4.200l4.200-.3z" fill="#8c8c8c"/></svg>
<div class="pbg" style="left:0;top:424px;width:108px;height:274px"></div>
<div class="sep" style="left:108px;top:424px;height:274px;background:#7e7e7e"></div>
<svg class="a" style="left:-2px;top:429px" width="9" height="8" viewBox="0 0 9 8"><path d="M0 0h9L4.500 8z" fill="#7a7a7a"/></svg>
<svg class="a" style="left:8px;top:424px" width="16" height="16" viewBox="0 0 16 16"><path d="M8 .8l2.200 4.800 5.200.6-3.900 3.500 1.100 5.200L8 12.300 3.400 14.900l1.100-5.200L.6 6.200l5.200-.6z" fill="#fcd81c" stroke="#b89a10" stroke-width=".9"/><path d="M8 2.500l1.500 3.500-3 0z" fill="#fff3a0" fill-opacity=".7"/></svg>
<div class="t b" style="left:27px;top:426px;letter-spacing:-.35px">Favorites</div>
<svg class="a" style="left:22px;top:441px" width="17" height="16" viewBox="0 0 17 16"><path d="M9.500 9.500l5.200 4.600" stroke="#b49410" stroke-width="3.600" stroke-linecap="round"/><path d="M9.500 9.500l5.200 4.600" stroke="#f4dc30" stroke-width="2" stroke-linecap="round"/><circle cx="6.300" cy="6" r="4.700" fill="#e4e4d8" fill-opacity=".6" stroke="#b49410" stroke-width="2.800"/><circle cx="6.300" cy="6" r="4.700" fill="none" stroke="#f0dc3c" stroke-width="1.500"/></svg>
<div class="t " style="left:40px;top:442px;">All Materials</div>
<svg class="a" style="left:22px;top:457px" width="17" height="16" viewBox="0 0 17 16"><path d="M9.500 9.500l5.200 4.600" stroke="#b49410" stroke-width="3.600" stroke-linecap="round"/><path d="M9.500 9.500l5.200 4.600" stroke="#f4dc30" stroke-width="2" stroke-linecap="round"/><circle cx="6.300" cy="6" r="4.700" fill="#e4e4d8" fill-opacity=".6" stroke="#b49410" stroke-width="2.800"/><circle cx="6.300" cy="6" r="4.700" fill="none" stroke="#f0dc3c" stroke-width="1.500"/></svg>
<div class="t " style="left:40px;top:458px;">All Models</div>
<svg class="a" style="left:22px;top:473px" width="17" height="16" viewBox="0 0 17 16"><path d="M9.500 9.500l5.200 4.600" stroke="#b49410" stroke-width="3.600" stroke-linecap="round"/><path d="M9.500 9.500l5.200 4.600" stroke="#f4dc30" stroke-width="2" stroke-linecap="round"/><circle cx="6.300" cy="6" r="4.700" fill="#e4e4d8" fill-opacity=".6" stroke="#b49410" stroke-width="2.800"/><circle cx="6.300" cy="6" r="4.700" fill="none" stroke="#f0dc3c" stroke-width="1.500"/></svg>
<div class="t " style="left:40px;top:474px;">All Prefabs</div>
<svg class="a" style="left:22px;top:489px" width="17" height="16" viewBox="0 0 17 16"><path d="M9.500 9.500l5.200 4.600" stroke="#b49410" stroke-width="3.600" stroke-linecap="round"/><path d="M9.500 9.500l5.200 4.600" stroke="#f4dc30" stroke-width="2" stroke-linecap="round"/><circle cx="6.300" cy="6" r="4.700" fill="#e4e4d8" fill-opacity=".6" stroke="#b49410" stroke-width="2.800"/><circle cx="6.300" cy="6" r="4.700" fill="none" stroke="#f0dc3c" stroke-width="1.500"/></svg>
<div class="t " style="left:40px;top:490px;">All Scripts</div>
<div class="a" style="left:0;top:520px;width:108px;height:15px;background:#8f8f8f"></div>
<svg class="a" style="left:8px;top:521px" width="16" height="13" viewBox="0 0 16 13"><path d="M.6 2.500c0-.9.600-1.600 1.400-1.600h3.800l1.500 1.500h6.700c.8 0 1.400.6 1.400 1.400v7.300c0 .8-.6 1.400-1.400 1.400H2c-.8 0-1.400-.6-1.400-1.400z" fill="#6d7a7a" stroke="#3e4848" stroke-width="1"/><path d="M1.200 5h13.600v1H1.200z" fill="#a8b4b4"/></svg>
<div class="t b" style="left:27px;top:521px;color:#e8e8e8;letter-spacing:-.5px">Assets</div>
<div class="pbg" style="left:109px;top:424px;width:754px;height:274px"></div>
<div class="a" style="left:109px;top:424px;width:754px;height:18px;background:#dedede;border-bottom:1px solid #8a8a8a"></div>
<div class="t b" style="left:115px;top:426px;">Assets</div>
<div class="a" style="left:109px;top:681px;width:754px;height:17px;background:#dedede;border-top:1px solid #8a8a8a"></div>
<div class="a" style="left:792px;top:688px;width:55px;height:4px;border-radius:2px;background:#7a7a7a;box-shadow:inset 0 1px 1px rgba(0,0,0,.4)"></div>
<div class="a" style="left:818px;top:684px;width:11px;height:11px;border-radius:6px;background:linear-gradient(#fff,#cfcfcf);border:1px solid #777"></div>
<div class="hline" style="left:0;top:698px;width:863px;background:#7c7c7c"></div>
<div class="utab" style="left:866px;top:78px;width:100px;background:linear-gradient(#ececec,#dedede)"></div>
<svg class="a" style="left:875px;top:80px" width="11" height="11" viewBox="0 0 11 11"><circle cx="5.500" cy="5.500" r="5.200" fill="#262626"/><rect x="4.600" y="4.600" width="1.900" height="3.900" fill="#fff"/><rect x="3.800" y="4.600" width="1.500" height="1" fill="#fff"/><rect x="3.600" y="7.700" width="3.900" height="1" fill="#fff"/><circle cx="5.500" cy="2.800" r="1.100" fill="#fff"/></svg>
<div class="t " style="left:890px;top:80px;">Inspector</div>
<svg class="a" style="left:1109px;top:82px" width="8" height="10" viewBox="0 0 8 10"><rect x="0" y="4.500" width="7.500" height="5.500" fill="#6a6a6a"/><path d="M2 4.500V2.500a2 2 0 0 1 4 -.3" fill="none" stroke="#6a6a6a" stroke-width="1.100"/></svg>
<svg class="a" style="left:1124px;top:86px" width="14" height="7" viewBox="0 0 14 7"><path d="M0 1.500h5L2.500 4.500z" fill="#444"/><path d="M6 1h8M6 3.500h8M6 6h8" stroke="#444" stroke-width="1"/></svg>
<div class="a" style="left:867px;top:94px;width:274px;height:41px;background:#dedede"></div>
<div class="pbg" style="left:867px;top:135px;width:274px;height:563px"></div>
<div class="hline" style="left:867px;top:135px;width:274px"></div>
<div class="sep" style="left:866px;top:94px;height:604px;background:#808080"></div>
<div class="sep" style="left:1141px;top:94px;height:604px;background:#8c8c8c"></div>
<div class="hline" style="left:867px;top:698px;width:275px;background:#7c7c7c"></div>
<svg class="a" style="left:869px;top:98px" width="24" height="24" viewBox="0 0 24 24" preserveAspectRatio="none"><path d="M1 5.500L10.500 1 23 4.200 13 9z" fill="#8cc63c"/><path d="M1 5.500L13 9l-.8 13.500L2.800 17z" fill="#4aa8e0"/><path d="M13 9L23 4.200l-1.500 12.300-9.300 6z" fill="#e8461c"/><path d="M1 5.500L13 9" stroke="#c8e8a0" stroke-width=".6"/><path d="M3.500 14.500h9L8 19z" fill="#1c1c1c"/></svg>
<div class="cb on" style="left:901px;top:99px"><svg class="a" style="left:-1px;top:-2px" width="13" height="13" viewBox="0 0 13 13"><path d="M2.500 6.500l3 3.500 5.500-8.500" fill="none" stroke="#1c2f5a" stroke-width="1.900"/></svg></div>
<div class="fld" style="left:918px;top:98px;width:151px">Main Camera</div>
<div class="cb" style="left:1075px;top:99px"></div>
<div class="t " style="left:1089px;top:99px;">Static</div>
<svg class="a" style="left:1128px;top:104px" width="8" height="5" viewBox="0 0 8 5"><path d="M0 0h8L4 4.600z" fill="#333"/></svg>
<div class="t " style="left:896px;top:118px;">Tag</div>
<div class="dd" style="left:918px;top:117px;width:91px">MainCamera</div><svg class="a" style="left:999px;top:121px" width="4" height="8" viewBox="0 0 5 9" preserveAspectRatio="none"><path d="M0 3.200h5L2.500 0zM0 5.800h5L2.500 9z" fill="#222"/></svg>
<div class="t " style="left:1017px;top:118px;letter-spacing:-.3px">Layer</div>
<div class="dd" style="left:1047px;top:117px;width:90px">Default</div><svg class="a" style="left:1127px;top:121px" width="4" height="8" viewBox="0 0 5 9" preserveAspectRatio="none"><path d="M0 3.200h5L2.500 0zM0 5.800h5L2.500 9z" fill="#222"/></svg>
<svg class="a" style="left:882px;top:138px" width="16" height="16" viewBox="0 0 16 16"><path d="M8 9V1.500" stroke="#8cd43c" stroke-width="2.200" stroke-linecap="round"/><path d="M8 9l6 3.500" stroke="#d83a28" stroke-width="2.200" stroke-linecap="round"/><path d="M8 9l-6 3.500" stroke="#2c8cd8" stroke-width="2.200" stroke-linecap="round"/></svg>
<svg class="a" style="left:870px;top:142px" width="9" height="8" viewBox="0 0 9 8"><path d="M0 0h9L4.500 8z" fill="#7a7a7a"/></svg>
<div class="t b" style="left:916px;top:139px;letter-spacing:0px">Transform</div>
<svg class="a" style="left:1104px;top:137px" width="14" height="15" viewBox="0 0 14 15"><defs><linearGradient id="bk" x1="0" y1="0" x2="1" y2="1"><stop offset="0" stop-color="#9db8dd"/><stop offset="1" stop-color="#3b5a8c"/></linearGradient></defs><path d="M1.500 1.200h10.500v11l-1.500 1.800H1.500z" fill="url(#bk)" stroke="#1f3050" stroke-width="1.200"/><path d="M12 1.200l1 .8v10.500l-2.500 1.500" fill="none" stroke="#1f3050" stroke-width="1"/><text x="6.300" y="10.500" font-family="Liberation Sans" font-size="8" font-weight="bold" fill="#dfe9f7" text-anchor="middle">?</text></svg>
<svg class="a" style="left:1122px;top:139px" width="15" height="12" viewBox="0 0 15 12"><g fill="#2a2a2a"><rect x="4.100" y="-.3" width="1.800" height="2.600" transform="rotate(0 5 5)"/><rect x="4.100" y="-.3" width="1.800" height="2.600" transform="rotate(45 5 5)"/><rect x="4.100" y="-.3" width="1.800" height="2.600" transform="rotate(90 5 5)"/><rect x="4.100" y="-.3" width="1.800" height="2.600" transform="rotate(135 5 5)"/><rect x="4.100" y="-.3" width="1.800" height="2.600" transform="rotate(180 5 5)"/><rect x="4.100" y="-.3" width="1.800" height="2.600" transform="rotate(225 5 5)"/><rect x="4.100" y="-.3" width="1.800" height="2.600" transform="rotate(270 5 5)"/><rect x="4.100" y="-.3" width="1.800" height="2.600" transform="rotate(315 5 5)"/></g><circle cx="5" cy="5" r="2.900" fill="none" stroke="#2a2a2a" stroke-width="1.700"/><path d="M9.600 7.400h4.800L12 11z" fill="#1e1e1e"/></svg>
<div class="t " style="left:882px;top:155px;">Position</div>
<div class="t " style="left:946px;top:155px;">X</div>
<div class="fld" style="left:957px;top:154px;width:50px">0</div>
<div class="t " style="left:1011px;top:155px;">Y</div>
<div class="fld" style="left:1022px;top:154px;width:51px">1</div>
<div class="t " style="left:1077px;top:155px;">Z</div>
<div class="fld" style="left:1088px;top:154px;width:50px">-10</div>
<div class="t " style="left:882px;top:173px;">Rotation</div>
<div class="t " style="left:946px;top:173px;">X</div>
<div class="fld" style="left:957px;top:172px;width:50px">0</div>
<div class="t " style="left:1011px;top:173px;">Y</div>
<div class="fld" style="left:1022px;top:172px;width:51px">0</div>
<div class="t " style="left:1077px;top:173px;">Z</div>
<div class="fld" style="left:1088px;top:172px;width:50px">0</div>
<div class="t " style="left:882px;top:191px;">Scale</div>
<div class="t " style="left:946px;top:191px;">X</div>
<div class="fld" style="left:957px;top:190px;width:50px">1</div>
<div class="t " style="left:1011px;top:191px;">Y</div>
<div class="fld" style="left:1022px;top:190px;width:51px">1</div>
<div class="t " style="left:1077px;top:191px;">Z</div>
<div class="fld" style="left:1088px;top:190px;width:50px">1</div>
<div class="hline" style="left:867px;top:210px;width:274px"></div>
<svg class="a" style="left:870px;top:217px" width="9" height="8" viewBox="0 0 9 8"><path d="M0 0h9L4.500 8z" fill="#7a7a7a"/></svg>
<svg class="a" style="left:881px;top:213px" width="17" height="14" viewBox="0 0 17 14"><circle cx="5" cy="3.500" r="2.600" fill="#6e6e6e" stroke="#3a3a3a" stroke-width=".8"/><circle cx="10.500" cy="3.500" r="2.600" fill="#6e6e6e" stroke="#3a3a3a" stroke-width=".8"/><rect x="2.500" y="6" width="10" height="6.500" rx="1" fill="#6a6a6a" stroke="#3a3a3a" stroke-width=".8"/><path d="M12.500 8.500l3.700-2v6l-3.700-2z" fill="#6a6a6a" stroke="#3a3a3a" stroke-width=".8"/><path d="M.5 7.500h2v3h-2z" fill="#6a6a6a" stroke="#3a3a3a" stroke-width=".6"/></svg>
<div class="cb on" style="left:901px;top:214px"><svg class="a" style="left:-1px;top:-2px" width="13" height="13" viewBox="0 0 13 13"><path d="M2.500 6.500l3 3.500 5.500-8.500" fill="none" stroke="#1c2f5a" stroke-width="1.900"/></svg></div>
<div class="t b" style="left:916px;top:214px;letter-spacing:-0.3px">Camera</div>
<svg class="a" style="left:1104px;top:212px" width="14" height="15" viewBox="0 0 14 15"><defs><linearGradient id="bk" x1="0" y1="0" x2="1" y2="1"><stop offset="0" stop-color="#9db8dd"/><stop offset="1" stop-color="#3b5a8c"/></linearGradient></defs><path d="M1.500 1.200h10.500v11l-1.500 1.800H1.500z" fill="url(#bk)" stroke="#1f3050" stroke-width="1.200"/><path d="M12 1.200l1 .8v10.500l-2.500 1.500" fill="none" stroke="#1f3050" stroke-width="1"/><text x="6.300" y="10.500" font-family="Liberation Sans" font-size="8" font-weight="bold" fill="#dfe9f7" text-anchor="middle">?</text></svg>
<svg class="a" style="left:1122px;top:214px" width="15" height="12" viewBox="0 0 15 12"><g fill="#2a2a2a"><rect x="4.100" y="-.3" width="1.800" height="2.600" transform="rotate(0 5 5)"/><rect x="4.100" y="-.3" width="1.800" height="2.600" transform="rotate(45 5 5)"/><rect x="4.100" y="-.3" width="1.800" height="2.600" transform="rotate(90 5 5)"/><rect x="4.100" y="-.3" width="1.800" height="2.600" transform="rotate(135 5 5)"/><rect x="4.100" y="-.3" width="1.800" height="2.600" transform="rotate(180 5 5)"/><rect x="4.100" y="-.3" width="1.800" height="2.600" transform="rotate(225 5 5)"/><rect x="4.100" y="-.3" width="1.800" height="2.600" transform="rotate(270 5 5)"/><rect x="4.100" y="-.3" width="1.800" height="2.600" transform="rotate(315 5 5)"/></g><circle cx="5" cy="5" r="2.900" fill="none" stroke="#2a2a2a" stroke-width="1.700"/><path d="M9.600 7.400h4.800L12 11z" fill="#1e1e1e"/></svg>
<div class="t " style="left:882px;top:230px;">Clear Flags</div>
<div class="dd" style="left:1000px;top:229px;width:138px">Skybox</div><svg class="a" style="left:1128px;top:233px" width="4" height="8" viewBox="0 0 5 9" preserveAspectRatio="none"><path d="M0 3.200h5L2.500 0zM0 5.800h5L2.500 9z" fill="#222"/></svg>
<div class="t " style="left:882px;top:248px;">Background</div>
<div class="a" style="left:1000px;top:247px;width:121px;height:16px;background:#000;border:1px solid #555"><div class="a" style="left:0;top:0;width:119px;height:11px;background:#314d79"></div><div class="a" style="left:0;top:11px;width:2px;height:3px;background:#fff"></div></div>
<svg class="a" style="left:1123px;top:247px" width="15" height="16" viewBox="0 0 15 16"><path d="M1 15l1-3 7-7 2 2-7 7z" fill="#e8e8e8" stroke="#333" stroke-width="1"/><path d="M8.500 4l2.500-2.500c1-1 3 1 2 2L10.500 6l1 1-1 1-4-4 1-1z" fill="#333"/></svg>
<div class="t " style="left:882px;top:266px;">Culling Mask</div>
<div class="dd" style="left:1000px;top:265px;width:138px">Everything</div><svg class="a" style="left:1128px;top:269px" width="4" height="8" viewBox="0 0 5 9" preserveAspectRatio="none"><path d="M0 3.200h5L2.500 0zM0 5.800h5L2.500 9z" fill="#222"/></svg>
<div class="t " style="left:882px;top:292px;">Projection</div>
<div class="dd" style="left:1000px;top:291px;width:138px">Perspective</div><svg class="a" style="left:1128px;top:295px" width="4" height="8" viewBox="0 0 5 9" preserveAspectRatio="none"><path d="M0 3.200h5L2.500 0zM0 5.800h5L2.500 9z" fill="#222"/></svg>
<div class="t " style="left:882px;top:310px;">Field of View</div>
<div class="a" style="left:1000px;top:315px;width:83px;height:4px;border-radius:2px;background:#8a8a8a;box-shadow:inset 0 1px 1px rgba(0,0,0,.35)"></div>
<div class="a" style="left:1024px;top:312px;width:10px;height:10px;border-radius:5px;background:linear-gradient(#fff,#d4d4d4);border:1px solid #7a7a7a"></div>
<div class="fld" style="left:1089px;top:309px;width:49px">60</div>
<div class="t " style="left:882px;top:328px;">Clipping Planes</div>
<div class="t " style="left:1002px;top:328px;">Near</div>
<div class="fld" style="left:1035px;top:327px;width:103px">0.3</div>
<div class="t " style="left:1002px;top:344px;">Far</div>
<div class="fld" style="left:1035px;top:343px;width:103px">1000</div>
<div class="t " style="left:882px;top:362px;">Viewport Rect</div>
<div class="t " style="left:897px;top:378px;">X</div>
<div class="fld" style="left:908px;top:377px;width:108px">0</div>
<div class="t " style="left:1020px;top:378px;">Y</div>
<div class="fld" style="left:1031px;top:377px;width:107px">0</div>
<div class="t " style="left:895px;top:394px;">W</div>
<div class="fld" style="left:908px;top:393px;width:108px">1</div>
<div class="t " style="left:1020px;top:394px;">H</div>
<div class="fld" style="left:1031px;top:393px;width:107px">1</div>
<div class="t " style="left:882px;top:420px;">Depth</div>
<div class="fld" style="left:1000px;top:419px;width:138px">-1</div>
<div class="t " style="left:882px;top:438px;">Rendering Path</div>
<div class="dd" style="left:1000px;top:437px;width:138px">Use Player Settings</div><svg class="a" style="left:1128px;top:441px" width="4" height="8" viewBox="0 0 5 9" preserveAspectRatio="none"><path d="M0 3.200h5L2.500 0zM0 5.800h5L2.500 9z" fill="#222"/></svg>
<div class="t " style="left:882px;top:456px;">Target Texture</div>
<div class="fld" style="left:1000px;top:455px;width:121px">None (Render Texture)</div>
<svg class="a" style="left:1126px;top:458px" width="10" height="10" viewBox="0 0 10 10"><circle cx="5" cy="5" r="3.800" fill="none" stroke="#444" stroke-width="1"/><circle cx="5" cy="5" r="1.300" fill="#444"/></svg>
<div class="t " style="left:882px;top:474px;">Occlusion Culling</div>
<div class="cb on" style="left:1001px;top:474px"><svg class="a" style="left:-1px;top:-2px" width="13" height="13" viewBox="0 0 13 13"><path d="M2.500 6.500l3 3.500 5.500-8.500" fill="none" stroke="#1c2f5a" stroke-width="1.900"/></svg></div>
<div class="t " style="left:882px;top:492px;">HDR</div>
<div class="cb" style="left:1001px;top:492px"></div>
<div class="hline" style="left:867px;top:511px;width:274px"></div>
<svg class="a" style="left:870px;top:518px" width="9" height="8" viewBox="0 0 9 8"><path d="M0 0h9L4.500 8z" fill="#7a7a7a"/></svg>
<svg class="a" style="left:882px;top:515px" width="14" height="13" viewBox="0 0 17 16" preserveAspectRatio="none"><rect x=".5" y="5.500" width="10" height="10" fill="#4a5258" stroke="#30363a" stroke-width="1"/><rect x="5.500" y=".5" width="11" height="11" fill="#f6f6f6" stroke="#c8c8c8" stroke-width="1"/></svg>
<div class="cb on" style="left:901px;top:515px"><svg class="a" style="left:-1px;top:-2px" width="13" height="13" viewBox="0 0 13 13"><path d="M2.500 6.500l3 3.500 5.500-8.500" fill="none" stroke="#1c2f5a" stroke-width="1.900"/></svg></div>
<div class="t b" style="left:916px;top:515px;letter-spacing:-0.45px">GUI Layer</div>
<svg class="a" style="left:1104px;top:513px" width="14" height="15" viewBox="0 0 14 15"><defs><linearGradient id="bk" x1="0" y1="0" x2="1" y2="1"><stop offset="0" stop-color="#9db8dd"/><stop offset="1" stop-color="#3b5a8c"/></linearGradient></defs><path d="M1.500 1.200h10.500v11l-1.500 1.800H1.500z" fill="url(#bk)" stroke="#1f3050" stroke-width="1.200"/><path d="M12 1.200l1 .8v10.500l-2.500 1.500" fill="none" stroke="#1f3050" stroke-width="1"/><text x="6.300" y="10.500" font-family="Liberation Sans" font-size="8" font-weight="bold" fill="#dfe9f7" text-anchor="middle">?</text></svg>
<svg class="a" style="left:1122px;top:515px" width="15" height="12" viewBox="0 0 15 12"><g fill="#2a2a2a"><rect x="4.100" y="-.3" width="1.800" height="2.600" transform="rotate(0 5 5)"/><rect x="4.100" y="-.3" width="1.800" height="2.600" transform="rotate(45 5 5)"/><rect x="4.100" y="-.3" width="1.800" height="2.600" transform="rotate(90 5 5)"/><rect x="4.100" y="-.3" width="1.800" height="2.600" transform="rotate(135 5 5)"/><rect x="4.100" y="-.3" width="1.800" height="2.600" transform="rotate(180 5 5)"/><rect x="4.100" y="-.3" width="1.800" height="2.600" transform="rotate(225 5 5)"/><rect x="4.100" y="-.3" width="1.800" height="2.600" transform="rotate(270 5 5)"/><rect x="4.100" y="-.3" width="1.800" height="2.600" transform="rotate(315 5 5)"/></g><circle cx="5" cy="5" r="2.900" fill="none" stroke="#2a2a2a" stroke-width="1.700"/><path d="M9.600 7.400h4.800L12 11z" fill="#1e1e1e"/></svg>
<div class="hline" style="left:867px;top:530px;width:274px"></div>
<svg class="a" style="left:870px;top:537px" width="9" height="8" viewBox="0 0 9 8"><path d="M0 0h9L4.500 8z" fill="#7a7a7a"/></svg>
<svg class="a" style="left:882px;top:534px" width="14" height="13" viewBox="0 0 17 16" preserveAspectRatio="none"><rect x=".5" y="5.500" width="10" height="10" fill="#4a5258" stroke="#30363a" stroke-width="1"/><circle cx="12" cy="4.500" r="4" fill="#f4c890" fill-opacity=".7"/><circle cx="12" cy="4.500" r="2" fill="#fff0d8"/></svg>
<div class="cb on" style="left:901px;top:534px"><svg class="a" style="left:-1px;top:-2px" width="13" height="13" viewBox="0 0 13 13"><path d="M2.500 6.500l3 3.500 5.500-8.500" fill="none" stroke="#1c2f5a" stroke-width="1.900"/></svg></div>
<div class="t b" style="left:916px;top:534px;letter-spacing:-0.4px">Flare Layer</div>
<svg class="a" style="left:1104px;top:532px" width="14" height="15" viewBox="0 0 14 15"><defs><linearGradient id="bk" x1="0" y1="0" x2="1" y2="1"><stop offset="0" stop-color="#9db8dd"/><stop offset="1" stop-color="#3b5a8c"/></linearGradient></defs><path d="M1.500 1.200h10.500v11l-1.500 1.800H1.500z" fill="url(#bk)" stroke="#1f3050" stroke-width="1.200"/><path d="M12 1.200l1 .8v10.500l-2.500 1.500" fill="none" stroke="#1f3050" stroke-width="1"/><text x="6.300" y="10.500" font-family="Liberation Sans" font-size="8" font-weight="bold" fill="#dfe9f7" text-anchor="middle">?</text></svg>
<svg class="a" style="left:1122px;top:534px" width="15" height="12" viewBox="0 0 15 12"><g fill="#2a2a2a"><rect x="4.100" y="-.3" width="1.800" height="2.600" transform="rotate(0 5 5)"/><rect x="4.100" y="-.3" width="1.800" height="2.600" transform="rotate(45 5 5)"/><rect x="4.100" y="-.3" width="1.800" height="2.600" transform="rotate(90 5 5)"/><rect x="4.100" y="-.3" width="1.800" height="2.600" transform="rotate(135 5 5)"/><rect x="4.100" y="-.3" width="1.800" height="2.600" transform="rotate(180 5 5)"/><rect x="4.100" y="-.3" width="1.800" height="2.600" transform="rotate(225 5 5)"/><rect x="4.100" y="-.3" width="1.800" height="2.600" transform="rotate(270 5 5)"/><rect x="4.100" y="-.3" width="1.800" height="2.600" transform="rotate(315 5 5)"/></g><circle cx="5" cy="5" r="2.900" fill="none" stroke="#2a2a2a" stroke-width="1.700"/><path d="M9.600 7.400h4.800L12 11z" fill="#1e1e1e"/></svg>
<div class="hline" style="left:867px;top:549px;width:274px"></div>
<svg class="a" style="left:870px;top:556px" width="9" height="8" viewBox="0 0 9 8"><path d="M0 0h9L4.500 8z" fill="#7a7a7a"/></svg>
<svg class="a" style="left:881px;top:551px" width="17" height="17" viewBox="0 0 17 17"><circle cx="8.500" cy="8.500" r="7.800" fill="#f49a1c" stroke="#b86a08" stroke-width="1"/><circle cx="8.500" cy="8.500" r="4.500" fill="none" stroke="#a85c04" stroke-width="1.600"/><circle cx="8.500" cy="8.500" r="1.800" fill="#ffd070"/></svg>
<div class="cb on" style="left:901px;top:553px"><svg class="a" style="left:-1px;top:-2px" width="13" height="13" viewBox="0 0 13 13"><path d="M2.500 6.500l3 3.500 5.500-8.500" fill="none" stroke="#1c2f5a" stroke-width="1.900"/></svg></div>
<div class="t b" style="left:916px;top:553px;letter-spacing:-0.3px">Audio Listener</div>
<svg class="a" style="left:1104px;top:551px" width="14" height="15" viewBox="0 0 14 15"><defs><linearGradient id="bk" x1="0" y1="0" x2="1" y2="1"><stop offset="0" stop-color="#9db8dd"/><stop offset="1" stop-color="#3b5a8c"/></linearGradient></defs><path d="M1.500 1.200h10.500v11l-1.500 1.800H1.500z" fill="url(#bk)" stroke="#1f3050" stroke-width="1.200"/><path d="M12 1.200l1 .8v10.500l-2.500 1.500" fill="none" stroke="#1f3050" stroke-width="1"/><text x="6.300" y="10.500" font-family="Liberation Sans" font-size="8" font-weight="bold" fill="#dfe9f7" text-anchor="middle">?</text></svg>
<svg class="a" style="left:1122px;top:553px" width="15" height="12" viewBox="0 0 15 12"><g fill="#2a2a2a"><rect x="4.100" y="-.3" width="1.800" height="2.600" transform="rotate(0 5 5)"/><rect x="4.100" y="-.3" width="1.800" height="2.600" transform="rotate(45 5 5)"/><rect x="4.100" y="-.3" width="1.800" height="2.600" transform="rotate(90 5 5)"/><rect x="4.100" y="-.3" width="1.800" height="2.600" transform="rotate(135 5 5)"/><rect x="4.100" y="-.3" width="1.800" height="2.600" transform="rotate(180 5 5)"/><rect x="4.100" y="-.3" width="1.800" height="2.600" transform="rotate(225 5 5)"/><rect x="4.100" y="-.3" width="1.800" height="2.600" transform="rotate(270 5 5)"/><rect x="4.100" y="-.3" width="1.800" height="2.600" transform="rotate(315 5 5)"/></g><circle cx="5" cy="5" r="2.900" fill="none" stroke="#2a2a2a" stroke-width="1.700"/><path d="M9.600 7.400h4.800L12 11z" fill="#1e1e1e"/></svg>
<div class="hline" style="left:867px;top:568px;width:274px"></div>
<div class="a" style="left:889px;top:579px;width:230px;height:21px;border:1px solid #5c5c5c;border-radius:3px;background:linear-gradient(#fbfbfb,#e9e9e9 50%,#d0d0d0);text-align:center;font-size:12.500px;line-height:19px;letter-spacing:.35px;color:#222">Add Component</div>
<div class="a" style="left:1139px;top:182px;width:4px;height:13px;background:#d0d0d0;border:1px solid #9a9a9a;border-radius:2px"></div>
<svg class="a" style="left:1127px;top:705px" width="14" height="14" viewBox="0 0 14 14"><path d="M13 2L2 13M13 6L6 13M13 10l-3 3" stroke="#5e5e5e" stroke-width="1"/></svg>
</div>
</div>
<!-- ===== Finder window ===== -->
<div class="a" id="finder" style="left:292px;top:338px;width:417px;height:317px;border-radius:5px;background:#fff;box-shadow:0 0 0 .5px rgba(0,0,0,.3),0 16px 36px 6px rgba(0,0,0,.42),0 1px 12px 1px rgba(0,0,0,.3);overflow:hidden">
  <div class="a" style="left:0;top:0;width:417px;height:55px;background:linear-gradient(#e9e9e9,#d3d3d3);border-bottom:1px solid #b1b1b1;box-shadow:inset 0 1px 0 #f6f6f6"></div>
  <div class="a" style="left:8px;top:5px;width:12px;height:12px;border-radius:6px;background:#fc3b4a;border:.5px solid #df2a38"></div>
  <div class="a" style="left:28px;top:5px;width:12px;height:12px;border-radius:6px;background:#fdb429;border:.5px solid #de9b1c"></div>
  <div class="a" style="left:48px;top:5px;width:12px;height:12px;border-radius:6px;background:#2bc840;border:.5px solid #1fa92e"></div>
  <svg class="a" style="left:176px;top:4px" width="18" height="15" viewBox="0 0 18 15"><path d="M1 2.200c0-.7.500-1.200 1.200-1.200h4.300l1.400 1.600h7.900c.7 0 1.200.5 1.200 1.200v8.900c0 .7-.5 1.200-1.200 1.200H2.200c-.7 0-1.200-.5-1.200-1.200z" fill="#4db8ee"/><path d="M1 4.200h16v8.500c0 .7-.5 1.200-1.200 1.200H2.200c-.7 0-1.200-.5-1.200-1.200z" fill="#5fc6f6"/><path d="M1.500 13.600h15" stroke="#2c96d0" stroke-width=".8"/></svg>
  <div class="a" style="left:197px;top:3px;font-size:13.500px;line-height:16px;color:#4c4c4c;white-space:nowrap">Assets</div>
  <!-- nav -->
  <div class="fbtn" style="left:8px;width:26px"></div>
  <div class="fbtn" style="left:35px;width:26px"></div>
  <svg class="a" style="left:15px;top:28px" width="10" height="14" viewBox="0 0 10 14"><path d="M8 1L2 7l6 6" fill="none" stroke="#6a6a6a" stroke-width="1.500"/></svg>
  <svg class="a" style="left:43px;top:28px" width="10" height="14" viewBox="0 0 10 14"><path d="M2 1l6 6-6 6" fill="none" stroke="#c4c4c4" stroke-width="1.500"/></svg>
  <!-- view group -->
  <div class="fbtn" style="left:69px;width:112px"></div>
  <div class="a" style="left:125px;top:24px;width:28px;height:22px;background:#666"></div>
  <div class="a" style="left:98px;top:24px;width:1px;height:22px;background:#e3e3e3"></div>
  <svg class="a" style="left:78px;top:29px" width="12" height="12" viewBox="0 0 12 12"><g fill="none" stroke="#6a6a6a" stroke-width="1.100"><rect x=".6" y=".6" width="3.800" height="3.800"/><rect x="7.600" y=".6" width="3.800" height="3.800"/><rect x=".6" y="7.600" width="3.800" height="3.800"/><rect x="7.600" y="7.600" width="3.800" height="3.800"/></g></svg>
  <svg class="a" style="left:105px;top:29px" width="15" height="12" viewBox="0 0 15 12"><path d="M0 1.500h15M0 4.500h15M0 7.500h15M0 10.500h15" stroke="#6a6a6a" stroke-width="1"/></svg>
  <svg class="a" style="left:131px;top:30px" width="16" height="10" viewBox="0 0 16 10"><rect x=".6" y=".6" width="14.800" height="8.800" rx="1" fill="none" stroke="#fff" stroke-width="1.200"/><path d="M5.500 .6v8.800M10.500 .6v8.800" stroke="#fff" stroke-width="1.200"/></svg>
  <svg class="a" style="left:158px;top:29px" width="18" height="12" viewBox="0 0 18 12"><g fill="none" stroke="#6a6a6a" stroke-width="1"><path d="M.5 0v12M2.800 1v10M15.200 1v10M17.500 0v12"/><rect x="5" y="1.500" width="8" height="9" rx="1"/></g></svg>
  <!-- arrange -->
  <div class="fbtn" style="left:189px;width:40px"></div>
  <svg class="a" style="left:196px;top:28px" width="15" height="14" viewBox="0 0 15 14"><g fill="none" stroke="#6a6a6a" stroke-width="1"><path d="M0 .5h15M0 7.500h15"/><rect x=".5" y="2.500" width="3" height="3"/><rect x="6" y="2.500" width="3" height="3"/><rect x="11.500" y="2.500" width="3" height="3"/><rect x=".5" y="9.500" width="3" height="3"/><rect x="6" y="9.500" width="3" height="3"/><rect x="11.500" y="9.500" width="3" height="3"/></g></svg>
  <svg class="a" style="left:217px;top:33px" width="8" height="6" viewBox="0 0 8 6"><path d="M.8 1l3.200 3.500L7.200 1" fill="none" stroke="#555" stroke-width="1.300"/></svg>
  <!-- action -->
  <div class="fbtn" style="left:237px;width:40px"></div>
  <svg class="a" style="left:244px;top:28px" width="15" height="15" viewBox="0 0 15 15"><g fill="#6a6a6a"><rect x="6.300" y="0" width="2.400" height="15" rx=".6"/><rect x="6.300" y="0" width="2.400" height="15" rx=".6" transform="rotate(45 7.500 7.500)"/><rect x="6.300" y="0" width="2.400" height="15" rx=".6" transform="rotate(90 7.500 7.500)"/><rect x="6.300" y="0" width="2.400" height="15" rx=".6" transform="rotate(135 7.500 7.500)"/></g><circle cx="7.500" cy="7.500" r="4.600" fill="#6a6a6a"/><circle cx="7.500" cy="7.500" r="2" fill="#f6f6f6"/></svg>
  <svg class="a" style="left:265px;top:33px" width="8" height="6" viewBox="0 0 8 6"><path d="M.8 1l3.200 3.500L7.200 1" fill="none" stroke="#555" stroke-width="1.300"/></svg>
  <!-- share -->
  <div class="fbtn" style="left:285px;width:40px"></div>
  <svg class="a" style="left:298px;top:26px" width="14" height="17" viewBox="0 0 14 17"><path d="M4.500 6.500H1.500v9.500h11V6.500H9.500" fill="none" stroke="#6a6a6a" stroke-width="1.100"/><path d="M7 11V1.200M4 4l3-3 3 3" fill="none" stroke="#6a6a6a" stroke-width="1.100"/></svg>
  <!-- tag -->
  <div class="fbtn" style="left:333px;width:40px"></div>
  <svg class="a" style="left:344px;top:30px" width="19" height="11" viewBox="0 0 19 11"><path d="M5.500 .6h11c1 0 1.800.8 1.800 1.800v6.200c0 1-.8 1.800-1.800 1.800h-11L.8 5.500z" fill="none" stroke="#6a6a6a" stroke-width="1.100"/><circle cx="5" cy="5.500" r=".9" fill="#6a6a6a"/></svg>
  <svg class="a" style="left:396px;top:32px" width="13" height="11" viewBox="0 0 13 11"><path d="M1 1l4.500 4.500L1 10M7 1l4.500 4.500L7 10" fill="none" stroke="#555" stroke-width="1.200"/></svg>
  <!-- content -->
  <div class="a" style="left:5px;top:56px;width:1px;height:222px;background:#ececec"></div>
  <div class="a" style="left:19px;top:56px;width:1px;height:222px;background:#ececec"></div>
  <div class="a" style="left:209px;top:56px;width:15px;height:222px;background:#f8f8f8;border-left:1px solid #ececec;border-right:1px solid #dcdcdc"></div>
  <div class="a" style="left:20px;top:56px;width:190px;height:17px;background:#115cd8"></div>
<svg class="a" style="left:26px;top:57px" width="17" height="14" viewBox="0 0 17 14"><path d="M.5 1.700C.5 1 1 .5 1.700.5h4l1.300 1.500h8.300c.7 0 1.200.5 1.200 1.200v9.100c0 .7-.5 1.200-1.200 1.200H1.700c-.7 0-1.200-.5-1.200-1.200z" fill="#4ab4ea"/><path d="M.5 3.600h16v8.700c0 .7-.5 1.200-1.200 1.200H1.700c-.7 0-1.200-.5-1.200-1.200z" fill="#62c8f8"/><path d="M1 13.200h15" stroke="#3a9ed8" stroke-width=".7"/></svg><div class="a" style="left:48px;top:56px;font-size:13px;line-height:17px;color:#fff;white-space:nowrap;text-shadow:0 0 .6px #fff">Assets</div><svg class="a" style="left:201px;top:60px" width="7" height="9" viewBox="0 0 7 9"><path d="M0 0l7 4.500L0 9z" fill="#fff"/></svg><svg class="a" style="left:26px;top:75px" width="17" height="14" viewBox="0 0 17 14"><path d="M.5 1.700C.5 1 1 .5 1.700.5h4l1.300 1.500h8.300c.7 0 1.200.5 1.200 1.200v9.100c0 .7-.5 1.200-1.200 1.200H1.700c-.7 0-1.200-.5-1.200-1.200z" fill="#4ab4ea"/><path d="M.5 3.600h16v8.700c0 .7-.5 1.200-1.200 1.200H1.700c-.7 0-1.200-.5-1.200-1.200z" fill="#62c8f8"/><path d="M1 13.200h15" stroke="#3a9ed8" stroke-width=".7"/></svg><div class="a" style="left:48px;top:74px;font-size:13px;line-height:17px;color:#262626;white-space:nowrap">Library</div><svg class="a" style="left:201px;top:78px" width="7" height="9" viewBox="0 0 7 9"><path d="M0 0l7 4.500L0 9z" fill="#7a7a7a"/></svg><svg class="a" style="left:26px;top:93px" width="17" height="14" viewBox="0 0 17 14"><path d="M.5 1.700C.5 1 1 .5 1.700.5h4l1.300 1.500h8.300c.7 0 1.200.5 1.200 1.200v9.100c0 .7-.5 1.200-1.200 1.200H1.700c-.7 0-1.200-.5-1.200-1.200z" fill="#4ab4ea"/><path d="M.5 3.600h16v8.700c0 .7-.5 1.200-1.200 1.200H1.700c-.7 0-1.200-.5-1.200-1.200z" fill="#62c8f8"/><path d="M1 13.200h15" stroke="#3a9ed8" stroke-width=".7"/></svg><div class="a" style="left:48px;top:92px;font-size:13px;line-height:17px;color:#262626;white-space:nowrap">ProjectSettings</div><svg class="a" style="left:201px;top:96px" width="7" height="9" viewBox="0 0 7 9"><path d="M0 0l7 4.500L0 9z" fill="#7a7a7a"/></svg><svg class="a" style="left:26px;top:111px" width="17" height="14" viewBox="0 0 17 14"><path d="M.5 1.700C.5 1 1 .5 1.700.5h4l1.300 1.500h8.300c.7 0 1.200.5 1.200 1.200v9.100c0 .7-.5 1.200-1.200 1.200H1.700c-.7 0-1.200-.5-1.200-1.200z" fill="#4ab4ea"/><path d="M.5 3.600h16v8.700c0 .7-.5 1.200-1.200 1.200H1.700c-.7 0-1.200-.5-1.200-1.200z" fill="#62c8f8"/><path d="M1 13.200h15" stroke="#3a9ed8" stroke-width=".7"/></svg><div class="a" style="left:48px;top:110px;font-size:13px;line-height:17px;color:#262626;white-space:nowrap">Temp</div><svg class="a" style="left:201px;top:114px" width="7" height="9" viewBox="0 0 7 9"><path d="M0 0l7 4.500L0 9z" fill="#7a7a7a"/></svg>
  <div class="a" style="left:0;top:278px;width:417px;height:1px;background:#e2e2e2"></div>
  <div class="a" style="left:0;top:279px;width:417px;height:14px;background:#fafafa"></div>
  <div class="a" style="left:130px;top:282px;width:275px;height:7px;border-radius:4px;background:#c1c1c1"></div>
  <div class="a" style="left:0;top:293px;width:417px;height:24px;background:linear-gradient(#e8e8e8,#d6d6d6);border-top:1px solid #b6b6b6;text-align:center;font-size:12px;line-height:22px;color:#464646">0 items, 62.94 GB available</div>
  <div class="a" style="left:11px;top:268px;width:1px;height:7px;background:#9a9a9a"></div><div class="a" style="left:14px;top:268px;width:1px;height:7px;background:#9a9a9a"></div>
  <div class="a" style="left:216px;top:268px;width:1px;height:7px;background:#9a9a9a"></div><div class="a" style="left:219px;top:268px;width:1px;height:7px;background:#9a9a9a"></div>
  <div class="a" style="left:1px;top:151px;width:2px;height:2px;background:#8a8a8a"></div><div class="a" style="left:1px;top:169px;width:2px;height:2px;background:#8a8a8a"></div>
</div>

</body>
</html>
